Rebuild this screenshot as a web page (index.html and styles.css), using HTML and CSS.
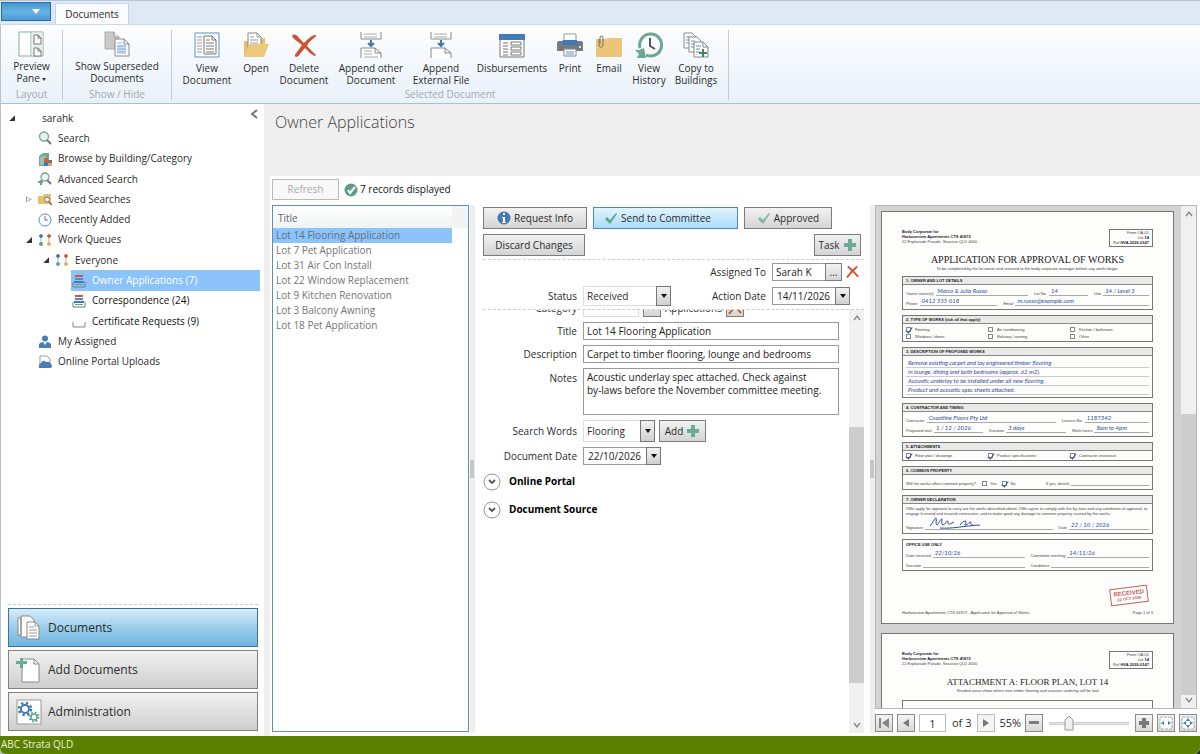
FILE: index.html
```html
<!DOCTYPE html>
<html lang="en">
<head>
<meta charset="utf-8">
<meta name="viewport" content="width=device-width, initial-scale=1">
<title>Documents - ABC Strata QLD</title>
<link rel="stylesheet" href="styles.css">
</head>
<body>
<svg class="defs" aria-hidden="true">
  <defs>
    <symbol id="plus" viewBox="0 0 14 14"><path d="M5 1h4v4h4v4H9v4H5V9H1V5h4z" fill="#6aab95"/></symbol>
    <symbol id="cross" viewBox="0 0 14 14"><path d="M2 1Q7 5 13 12M12 1Q6 6 1 13" fill="none" stroke="#d0522f" stroke-width="2"/></symbol>
    <symbol id="tick" viewBox="0 0 14 12"><path d="M1 7l2-2 3 3 6-7 1 1-7 10z" fill="#5fa58a"/></symbol>
    <symbol id="flow" viewBox="0 0 14 14"><path d="M3 3v8M11 3v8" stroke="#a8b4bc" stroke-width="1"/><path d="M1 3h4M3 1v4" stroke="#3f7ab5" stroke-width="1.500"/><circle cx="3" cy="3" r="1.500" fill="#3f7ab5"/><path d="M9 3h4M11 1v4" stroke="#d6573c" stroke-width="1.500"/><circle cx="11" cy="3" r="1.500" fill="#d6573c"/><circle cx="3" cy="11" r="2" fill="#5fa58a"/><circle cx="11" cy="11" r="2" fill="#e3b457"/></symbol>
    <symbol id="tray" viewBox="0 0 14 14"><path d="M3 1h8v2H3z" fill="#d6573c"/><path d="M3 4h8v2H3z" fill="#5b87ba"/><path d="M2 7h10v2H2z" fill="#3f7ab5"/><path d="M3 10h8v1H3z" fill="#5fa58a"/><path d="M1 8v5h12V8" fill="none" stroke="#777"/></symbol>
    <symbol id="chev-up" viewBox="0 0 10 10"><path d="M2 7l3-4 3 4" fill="none" stroke="#858585" stroke-width="1.3"/></symbol>
    <symbol id="chev-down" viewBox="0 0 10 10"><path d="M2 3l3 4 3-4" fill="none" stroke="#858585" stroke-width="1.3"/></symbol>
  </defs>
</svg>
<div class="app">
  <header class="tabs">
    <button class="app-menu" aria-label="Application menu"><svg width="8" height="5"><path d="M0 0h8L4 5z" fill="#fff"/></svg></button>
    <button class="tab">Documents</button>
  </header>

  <nav class="ribbon" aria-label="Ribbon">
    <section class="group group-layout">
      <div class="tools">
        <button class="tool"><svg width="26" height="26" viewBox="0 0 26 26"><path d="M1 1h24v24H1z" fill="#fff" stroke="#86b09c"/><path d="M13 1v24" stroke="#86b09c"/><path d="M13.500 1.500h11v23h-11z" fill="#e6f0ec"/><path d="M16 4h4l3 3v6h-7zM16 17h4l3 3v5h-7zM20 4v3h3M20 17v3h3" fill="#fff" stroke="#777"/></svg><span>Preview<br>Pane <i class="caret"></i></span></button>
      </div>
      <h2>Layout</h2>
    </section>
    <section class="group group-show">
      <div class="tools">
        <button class="tool"><svg width="26" height="26" viewBox="0 0 26 26"><path d="M1 1h9l5 5v12H1z" fill="#c9c9c9" stroke="#aaa"/><path d="M10 1v5h5" fill="#eee" stroke="#999"/><path d="M11 8h9l5 5v12H11z" fill="#fff" stroke="#888"/><path d="M20 8v5h5" fill="none" stroke="#888"/><path d="M13 14h9v9h-9z" fill="#c8dcf2"/><path d="M13 12h5M13 15h9M13 18h9M13 21h9" stroke="#8fb2d8"/></svg><span>Show Superseded<br>Documents</span></button>
      </div>
      <h2>Show / Hide</h2>
    </section>
    <section class="group group-doc">
      <div class="tools">
        <button class="tool low w60"><svg width="26" height="26" viewBox="0 0 26 26"><path d="M1 1h24v24H1z" fill="#fff" stroke="#5b8fc7"/><path d="M3 5h5M3 8h5M3 11h5M3 14h5M3 17h5M3 20h5" stroke="#999"/><path d="M10 4h8l4 4v14H10z" fill="#fff" stroke="#777"/><path d="M18 4v4h4M12 8h4M12 11h8M12 14h8M12 17h8M12 20h8" fill="none" stroke="#777"/></svg><span>View<br>Document</span></button>
        <button class="tool low w38"><svg width="28" height="26" viewBox="0 0 28 26"><path d="M2 24V9h4V6h17v6" fill="#e8bf6a"/><path d="M6 1h9l4 4v12H6z" fill="#fff" stroke="#888"/><path d="M15 1v4h4M8 5h4M8 8h8M8 11h8" fill="none" stroke="#999"/><path d="M7 12h20l-5 13H2z" fill="#ecc97d"/></svg><span>Open</span></button>
        <button class="tool low w58"><svg width="26" height="26" viewBox="0 0 26 26"><path d="M1 4c2-3 5-1 7 2l5 5C17 7 21 3 24 3c2 0 1 2-1 3-3 2-6 5-7 8 3 3 7 7 9 9-1 2-3 0-5-1l-6-6c-4 4-6 9-9 9-2-1-1-3 1-5l5-7C8 10 3 8 1 4z" fill="#cf5332"/></svg><span>Delete<br>Document</span></button>
        <button class="tool low w76"><svg width="24" height="26" viewBox="0 0 24 26"><path d="M2 0v7h20V0" fill="#fff" stroke="#888"/><path d="M5 2h13M5 5h13" stroke="#aaa"/><path d="M12 8v6M9 11l3 3 3-3" fill="none" stroke="#3f7ab5" stroke-width="2"/><path d="M2 26V16h14l6 5v5M16 16v5h6" fill="#fff" stroke="#888"/><path d="M5 19h8M5 22h8M5 25h14" stroke="#aaa"/></svg><span>Append other<br>Document</span></button>
        <button class="tool low w64"><svg width="24" height="26" viewBox="0 0 24 26"><path d="M2 0v7h20V0" fill="#fff" stroke="#888"/><path d="M5 2h13M5 5h13" stroke="#aaa"/><path d="M12 8v6M9 11l3 3 3-3" fill="none" stroke="#3f7ab5" stroke-width="2"/><path d="M2 26V16h14l6 5v5M16 16v5h6" fill="#fff" stroke="#888"/></svg><span>Append<br>External File</span></button>
        <button class="tool low w78"><svg width="26" height="26" viewBox="0 0 26 26"><path d="M1 3h24v22H1z" fill="#fff" stroke="#777"/><path d="M0 2h26v6H0z" fill="#447ab5"/><path d="M4 11h5M4 14h5M4 17h5M4 20h5M4 23h5" stroke="#777"/><path d="M12 10h10v3H12zM12 15h10v3H12zM12 20h10v3H12z" fill="#fff" stroke="#777"/></svg><span>Disbursements</span></button>
        <button class="tool low w38"><svg width="26" height="26" viewBox="0 0 26 26"><path d="M2 9h22q2 0 2 2v8H0v-8q0-2 2-2z" fill="#747a80"/><path d="M7 2h12v8H7z" fill="#fff" stroke="#999"/><path d="M6 8h14l1 5H5z" fill="#3f7ab5"/><path d="M7 17h12v7H7z" fill="#fff" stroke="#888"/><path d="M9 20h8M9 22h8" stroke="#5b94cc"/><circle cx="23" cy="15" r="1" fill="#fff"/></svg><span>Print</span></button>
        <button class="tool low w40"><svg width="26" height="26" viewBox="0 0 26 26"><path d="M0 7h10l2-1h14v19H0z" fill="#ebc67a"/><path d="M3 7v7q2 3 4 0V5q-1-2-3 0v7" fill="none" stroke="#7d7257"/></svg><span>Email</span></button>
        <button class="tool low w40"><svg width="28" height="26" viewBox="0 0 28 26"><path d="M5 16a11 11 0 1 1 6 7" fill="none" stroke="#6ba791" stroke-width="3"/><path d="M0 18h4l5-2 2 10H2l2-4z" fill="#6ba791"/><path d="M15 6v8l5 3" fill="none" stroke="#555" stroke-width="2"/></svg><span>View<br>History</span></button>
        <button class="tool low w54"><svg width="26" height="26" viewBox="0 0 26 26"><path d="M1 1h8l4 4v11H1z" fill="#fff" stroke="#888"/><path d="M3 5h4M3 8h4M3 11h4" stroke="#5b94cc"/><path d="M6 5h8l4 4v11H6z" fill="#fff" stroke="#888"/><path d="M8 9h4M8 12h4M8 15h4" stroke="#5b94cc"/><path d="M11 10h9l5 5v10H11z" fill="#fff" stroke="#888"/><path d="M20 10v5h5" fill="none" stroke="#888"/><path d="M13 14h5M13 17h4M13 20h4" stroke="#5b94cc"/><path d="M19 17h2v3h3v2h-3v3h-2v-3h-3v-2h3z" fill="#3a8a5d"/></svg><span>Copy to<br>Buildings</span></button>
      </div>
      <h2>Selected Document</h2>
    </section>
  </nav>

  <div class="body">
    <aside class="sidebar">
      <button class="collapse" aria-label="Collapse navigation"><svg width="8" height="10"><path d="M7 1L2 5l5 4" fill="none" stroke="#777" stroke-width="2"/></svg></button>
      <ul class="tree">
        <li class="node l0 root"><i class="exp"></i><a href="#">sarahk</a></li>
        <li class="node l1"><i></i><svg viewBox="0 0 14 14"><circle cx="6" cy="5.500" r="4.500" fill="#e6f3ee" stroke="#7da393" stroke-width="1.300"/><path d="M9 9l4 4" stroke="#777" stroke-width="2"/></svg><a href="#">Search</a></li>
        <li class="node l1"><i></i><svg viewBox="0 0 14 14"><path d="M1 4l4-3h6v13H1z" fill="#6fa893"/><path d="M3 5v8M5 4v9M7 4v9" stroke="#c5ddd3"/><path d="M6 6h4v4H6z" fill="#d6573c"/><path d="M10 8h4v3h-4z" fill="#777"/><path d="M6 10h4v4H6z" fill="#3f7ab5"/><path d="M10 11h4v3h-4z" fill="#e3a857"/></svg><a href="#">Browse by Building/Category</a></li>
        <li class="node l1"><i></i><svg viewBox="0 0 14 14"><circle cx="7" cy="5" r="4" fill="#e6f3ee" stroke="#7da393" stroke-width="1.300"/><path d="M9 8l4 4" stroke="#777" stroke-width="2"/><path d="M0 10h5M3 8v5" stroke="#5fa58a" stroke-width="2"/></svg><a href="#">Advanced Search</a></li>
        <li class="node l1"><i class="closed"></i><svg viewBox="0 0 14 14"><path d="M0 4h5l1-2h7v10H0z" fill="#e8bf6a"/><circle cx="9" cy="7.500" r="2.500" fill="#eee" stroke="#777"/><path d="M11 10l3 3" stroke="#666" stroke-width="1.500"/></svg><a href="#">Saved Searches</a></li>
        <li class="node l1"><i></i><svg viewBox="0 0 14 14"><circle cx="7" cy="7" r="6" fill="#fff" stroke="#5f8fc0"/><path d="M7 3v4h3" fill="none" stroke="#777"/></svg><a href="#">Recently Added</a></li>
        <li class="node l1"><i class="exp"></i><svg viewBox="0 0 14 14"><use href="#flow"/></svg><a href="#">Work Queues</a></li>
        <li class="node l2"><i class="exp"></i><svg viewBox="0 0 14 14"><use href="#flow"/></svg><a href="#">Everyone</a></li>
        <li class="node l3 selected"><svg viewBox="0 0 14 14"><use href="#tray"/></svg><a href="#">Owner Applications (7)</a></li>
        <li class="node l3 dark"><svg viewBox="0 0 14 14"><use href="#tray"/></svg><a href="#">Correspondence (24)</a></li>
        <li class="node l3 dark"><svg viewBox="0 0 14 14"><path d="M1 8v5h12V8" fill="none" stroke="#888"/></svg><a href="#">Certificate Requests (9)</a></li>
        <li class="node l1"><i></i><svg viewBox="0 0 14 14"><circle cx="7" cy="3.500" r="3" fill="#4a7fb5"/><path d="M1 13V9q2-2 4-2l2 3 2-3q2 0 4 2v4z" fill="#4a7fb5"/></svg><a href="#">My Assigned</a></li>
        <li class="node l1"><i></i><svg viewBox="0 0 14 14"><path d="M2 1h7l3 3v6H2z" fill="#fff" stroke="#999"/><path d="M1 13q-1-4 2-5 2-4 5-1 4-1 5 2 2 2 0 4z" fill="#4a7fb5"/></svg><a href="#">Online Portal Uploads</a></li>
      </ul>
      <div class="modules">
        <button class="module active"><svg width="26" height="26" viewBox="0 0 26 26"><path d="M2 3h3v17H2zM5 1h9l4 4v17H5z" fill="#fff" stroke="#888"/><path d="M11 7h8l4 4v13H11z" fill="#fff" stroke="#888"/><path d="M19 7v4h4M13 12h5M13 15h8M13 18h8M13 21h8" fill="none" stroke="#999"/></svg>Documents</button>
        <button class="module"><svg width="26" height="26" viewBox="0 0 26 26"><path d="M6 2h12l5 5v18H6z" fill="#fff" stroke="#888"/><path d="M18 2v5h5" fill="none" stroke="#888"/><path d="M4 1h3v3h4v3H7v4H4V7H0V4h4z" fill="#6aab95"/></svg>Add Documents</button>
        <button class="module"><svg width="26" height="26" viewBox="0 0 26 26"><path d="M1 1h24v24H1z" fill="#fff" stroke="#999"/><circle cx="9" cy="10" r="4" fill="none" stroke="#3f7ab5" stroke-width="2"/><circle cx="9" cy="10" r="6" fill="none" stroke="#3f7ab5" stroke-width="2.500" stroke-dasharray="2.360"/><circle cx="18" cy="18" r="3" fill="none" stroke="#5fa58a" stroke-width="1.500"/><circle cx="18" cy="18" r="4.500" fill="none" stroke="#5fa58a" stroke-width="2" stroke-dasharray="1.770"/></svg>Administration</button>
      </div>
    </aside>

    <main class="content">
      <h1 class="title">Owner Applications</h1>
      <div class="panes">
        <section class="list-pane">
          <div class="list-tools"><button class="refresh" disabled>Refresh</button>
            <p class="status"><svg width="14" height="14"><circle cx="7" cy="7" r="6.500" fill="#5d9f86"/><path d="M4 7l2 3 5-6" fill="none" stroke="#fff" stroke-width="2"/></svg>7 records displayed</p></div>
          <div class="list-box">
            <table class="records">
              <thead><tr><th scope="col">Title</th></tr></thead>
              <tbody>
                <tr class="current"><td>Lot 14 Flooring Application</td></tr>
                <tr><td>Lot 7 Pet Application</td></tr>
                <tr><td>Lot 31 Air Con Install</td></tr>
                <tr><td>Lot 22 Window Replacement</td></tr>
                <tr><td>Lot 9 Kitchen Renovation</td></tr>
                <tr><td>Lot 3 Balcony Awning</td></tr>
                <tr><td>Lot 18 Pet Application</td></tr>
              </tbody>
            </table>
          </div>
        </section>
        <div class="splitter"></div>

        <form class="form-pane">
          <div class="actions">
            <button type="button" class="btn w-104"><svg width="14" height="14"><circle cx="7" cy="7" r="6.500" fill="#4379b5"/><path d="M6 2h2v2H6zM5 6h3v5h1v1H5v-1h1V7H5z" fill="#fff"/></svg>Request Info</button>
            <button type="button" class="btn primary w-145"><svg width="14" height="12"><use href="#tick"/></svg>Send to Committee</button>
            <button type="button" class="btn w-88"><svg class="faded" width="14" height="12"><use href="#tick"/></svg>Approved</button>
          </div>
          <div class="actions spread">
            <button type="button" class="btn w-102">Discard Changes</button>
            <button type="button" class="btn task">Task<svg width="14" height="14"><use href="#plus"/></svg></button>
          </div>
          <div class="summary">
            <label class="lab-right" for="assigned">Assigned To</label>
            <div class="cluster"><input class="box assignee" id="assigned" value="Sarah K"><button type="button" class="btn more" aria-label="Choose assignee">...</button><button type="button" class="clear" aria-label="Clear assignee"><svg width="13" height="14" viewBox="0 0 14 14"><use href="#cross"/></svg></button></div>
            <label class="lab-left" for="status">Status</label>
            <span class="picker status-pick"><select id="status"><option>Received</option></select><i class="drop"></i></span>
            <label for="action">Action Date</label>
            <div class="cluster date"><input class="box" id="action" value="14/11/2026"><button type="button" class="drop" aria-label="Pick action date"></button></div>
          </div>
          <div class="scroller">
            <div class="fields">
              <label for="category">Category</label>
              <div class="cluster category"><input class="box soft" id="category"><button type="button" class="btn more" aria-label="Choose category"></button><span>Applications</span><button type="button" class="btn more" aria-label="Clear category"><svg width="14" height="14"><use href="#cross"/></svg></button></div>
              <label for="title">Title</label>
              <input class="box" id="title" value="Lot 14 Flooring Application">
              <label for="desc">Description</label>
              <input class="box" id="desc" value="Carpet to timber flooring, lounge and bedrooms">
              <label class="top" for="notes">Notes</label>
              <textarea class="box" id="notes">Acoustic underlay spec attached. Check against
by-laws before the November committee meeting.</textarea>
              <label for="words">Search Words</label>
              <div class="cluster"><span class="picker words"><select id="words"><option>Flooring</option></select><i class="drop"></i></span><button type="button" class="btn add">Add<svg width="14" height="14"><use href="#plus"/></svg></button></div>
              <label for="docdate">Document Date</label>
              <div class="cluster date"><input class="box" id="docdate" value="22/10/2026"><button type="button" class="drop" aria-label="Pick document date"></button></div>
              <button type="button" class="section-toggle"><svg width="18" height="18"><circle cx="9" cy="9" r="8" fill="#fff" stroke="#999"/><path d="M6 7l3 3 3-3" fill="none" stroke="#555" stroke-width="1.800"/></svg>Online Portal</button>
              <button type="button" class="section-toggle"><svg width="18" height="18"><circle cx="9" cy="9" r="8" fill="#fff" stroke="#999"/><path d="M6 7l3 3 3-3" fill="none" stroke="#555" stroke-width="1.800"/></svg>Document Source</button>
            </div>
            <div class="bar form-bar"><svg width="10" height="10"><use href="#chev-up"/></svg><i class="before"></i><i class="thumb"></i><i class="after"></i><svg width="10" height="10"><use href="#chev-down"/></svg></div>
          </div>
        </form>
        <div class="splitter"></div>

        <section class="preview-pane" aria-label="Document preview">
          <div class="viewer">
            <div class="sheets">
              <article class="sheet">
                <header class="sheet-head"><p><b>Body Corporate for<br>Harbourview Apartments CTS 41872</b><br>22 Esplanade Parade, Seaview QLD 4000</p><p class="ref">Form OA-01<br>Lot <b>14</b><br>Ref <b>HVA-2026-0147</b></p></header>
                <h2 class="wide">APPLICATION FOR APPROVAL OF WORKS</h2>
                <p class="sub">To be completed by the lot owner and returned to the body corporate manager before any works begin.</p>
                <section><h3>1. OWNER AND LOT DETAILS</h3><div class="part">
                  <div class="line c-owner"><p>Owner name(s)<em>Marco &amp; Julia Russo</em></p><p>Lot No.<em>14</em></p><p>Unit<em>14 / Level 3</em></p></div>
                  <div class="line c-phone"><p>Phone<em>0412 555 018</em></p><p>Email<em>m.russo@example.com</em></p></div></div></section>
                <section><h3>2. TYPE OF WORKS (tick all that apply)</h3><div class="part checks">
                  <p><i class="on"></i>Flooring</p><p><i></i>Air conditioning</p><p><i></i>Kitchen / bathroom</p><p><i></i>Windows / doors</p><p><i></i>Balcony / awning</p><p><i></i>Other</p></div></section>
                <section><h3>3. DESCRIPTION OF PROPOSED WORKS</h3><div class="part prose">
                  <em>Remove existing carpet and lay engineered timber flooring</em><em>in lounge, dining and both bedrooms (approx. 62 m2).</em><em>Acoustic underlay to be installed under all new flooring.</em><em>Product and acoustic spec sheets attached.</em></div></section>
                <section><h3>4. CONTRACTOR AND TIMING</h3><div class="part">
                  <div class="line c-contractor"><p>Contractor<em>Coastline Floors Pty Ltd</em></p><p>Licence No.<em>1187342</em></p></div>
                  <div class="line c-thirds"><p>Proposed start<em>1 / 12 / 2026</em></p><p>Duration<em>3 days</em></p><p>Work hours<em>8am to 4pm</em></p></div></div></section>
                <section><h3>5. ATTACHMENTS</h3><div class="part checks one"><p><i class="on"></i>Floor plan / drawings</p><p><i class="on"></i>Product specifications</p><p><i class="on"></i>Contractor insurance</p></div></section>
                <section><h3>6. COMMON PROPERTY</h3><div class="part"><div class="line c-common"><p>Will the works affect common property?</p><p class="opt"><i></i>Yes</p><p class="opt"><i class="on"></i>No</p><p>If yes, details<em></em></p></div></div></section>
                <section><h3>7. OWNER DECLARATION</h3><div class="part declare">
                  <p class="legal">I/We apply for approval to carry out the works described above. I/We agree to comply with the by-laws and any conditions of approval, to engage licensed and insured contractors, and to make good any damage to common property caused by the works.</p>
                  <div class="line c-sign"><p>Signature<em><svg width="56" height="12" viewBox="0 0 56 12"><path d="M3 9C6 6 7 2 9 1c1 2-1 6 1 7 2-1 3-6 5-6 0 2-1 6 1 6s3-4 5-4c0 2 0 4 2 3l4-2M33 8c2-3 4-4 6-4 0 3-2 4-1 4 3 0 4-3 6-3-1 2 0 3 2 3M13 11c12 1 23-2 40-3" fill="none" stroke="#2f4d9c" stroke-width="1"/></svg></em></p><p>Date<em>22 / 10 / 2026</em></p></div></div></section>
                <section class="office"><h4>OFFICE USE ONLY</h4>
                  <div class="line c-half"><p>Date received<em>22/10/26</em></p><p>Committee meeting<em>14/11/26</em></p></div>
                  <div class="line c-half"><p>Decision<em></em></p><p>Conditions<em></em></p></div></section>
                <div class="stamp"><b>RECEIVED</b>22 OCT 2026</div>
                <footer><span>Harbourview Apartments CTS 41872 - Application for Approval of Works</span><span>Page 1 of 3</span></footer>
              </article>
              <article class="sheet">
                <header class="sheet-head"><p><b>Body Corporate for<br>Harbourview Apartments CTS 41872</b><br>22 Esplanade Parade, Seaview QLD 4000</p><p class="ref">Form OA-01<br>Lot <b>14</b><br>Ref <b>HVA-2026-0147</b></p></header>
                <h2>ATTACHMENT A: FLOOR PLAN, LOT 14</h2>
                <p class="sub">Shaded areas show where new timber flooring and acoustic underlay will be laid</p>
                <div class="plan"></div>
              </article>
            </div>
            <div class="bar view-bar"><svg width="10" height="10"><use href="#chev-up"/></svg><i class="before"></i><i class="thumb"></i><svg width="10" height="10"><use href="#chev-down"/></svg></div>
          </div>
          <div class="pager">
            <button class="sq" aria-label="First page"><svg width="12" height="12"><path d="M1 1h2v10H1zM11 1v10L4 6z" fill="#858585"/></svg></button>
            <button class="sq" aria-label="Previous page"><svg width="12" height="12"><path d="M9 2v8L3 6z" fill="#777"/></svg></button>
            <input class="page-no" aria-label="Page number" value="1"><span class="of">of 3</span>
            <button class="sq light" aria-label="Next page"><svg width="12" height="12"><path d="M3 2v8l6-4z" fill="#777"/></svg></button>
            <span class="zoom">55%</span>
            <button class="sq" aria-label="Zoom out"><svg width="12" height="12"><path d="M1 4h10v3H1z" fill="#7c7c7c"/></svg></button>
            <input class="slider" type="range" aria-label="Zoom" min="0" max="100" value="20">
            <button class="sq" aria-label="Zoom in"><svg width="12" height="12"><path d="M4 1h4v3h3v4H8v3H4V8H1V4h3z" fill="#777"/></svg></button>
            <button class="sq" aria-label="Fit width"><svg width="14" height="14"><path d="M1 1h12v12H1z" fill="#fff" stroke="#aaa" stroke-dasharray="3 1"/><path d="M2 7l3-2v4zM12 7L9 5v4z" fill="#3f7ab5"/></svg></button>
            <button class="sq" aria-label="Fit page"><svg width="14" height="14"><path d="M1 1h12v12H1z" fill="#fff" stroke="#aaa" stroke-dasharray="3 1"/><path d="M2 7l3-2v4zM12 7L9 5v4zM7 2L5 5h4zM7 12L5 9h4z" fill="#3f7ab5"/></svg></button>
          </div>
        </section>
      </div>
    </main>
  </div>
  <footer class="statusbar">ABC Strata QLD</footer>
</div>
</body>
</html>
```
FILE: styles.css
```css
* { box-sizing: border-box; }
body {
  margin: 0;
  background: linear-gradient(90deg, #a9c7b0, #14202c);
  font: 10px/13px "Open Sans", "Noto Sans", sans-serif;
  color: #2b2b2b;
}
h1, h2, h3, h4, p, ul { margin: 0; padding: 0; font-weight: 400; }
button, input, select, textarea { font: inherit; color: inherit; margin: 0; border-radius: 0; }
button { padding: 0; background: none; border: 0; }
a { color: inherit; text-decoration: none; }
svg { flex: none; display: block; }
.defs { position: absolute; width: 0; height: 0; }
.app { display: flex; flex-direction: column; height: 100vh; min-width: 1000px; overflow: hidden; border-radius: 0 0 6px 6px; background: #fff; }

/* Tab strip and ribbon */
.tabs { display: flex; flex: none; height: 24px; gap: 4px; padding: 2px 0 0 1px; background: #dfe9f5; border-top: 1px solid #b3c4d9; }
.app-menu { display: flex; align-items: center; justify-content: center; width: 50px; height: 19px; margin-top: -1px; padding-left: 20px; border: 1px solid #2a6cb0; background: linear-gradient(#4796d0, #66b3e2 50%, #4d9bd4); }
.tab { width: 74px; height: 22px; border: 1px solid #c3d4e8; border-bottom: 0; background: #fafcfe; }
.ribbon { display: flex; flex: none; height: 80px; padding: 5px 0 3px; background: linear-gradient(#fdfeff, #e9f1fa); border-top: 1px solid #c9d8ea; border-bottom: 1px solid #a9bfd8; border-left: 1px solid #b4c5da; }
.group { display: flex; flex-direction: column; justify-content: space-between; border-right: 1px solid #c2ccd8; text-align: center; }
.group h2 { font-size: 10px; line-height: 12px; color: #a3a9b0; }
.group-layout { width: 62px; }
.group-show { width: 109px; }
.group-doc { padding: 0 5px; }
.tools { display: flex; justify-content: center; }
.tool { display: flex; flex-direction: column; align-items: center; gap: 3px; padding-top: 1px; line-height: 12px; height: 55px; white-space: nowrap; color: #2b2b2b; }
.low { gap: 4px; padding-top: 2px; }
.w38 { width: 38px; } .w40 { width: 40px; } .w54 { width: 54px; } .w58 { width: 58px; }
.w60 { width: 60px; } .w64 { width: 64px; } .w76 { width: 76px; } .w78 { width: 78px; }
.caret { display: inline-block; border: 2px solid transparent; border-top: 3px solid #333; border-bottom: 0; vertical-align: middle; }

/* Navigation */
.body { display: flex; flex: 1; min-height: 0; }
.sidebar { display: grid; grid-template: auto 1fr / 1fr; flex: none; width: 264px; border-left: 1px solid #b4c5da; }
.tree { grid-area: 1 / 1; display: grid; grid-auto-rows: 1fr; height: 264px; margin-top: 4px; list-style: none; }
.collapse { grid-area: 1 / 1; justify-self: end; align-self: start; margin: 5px 6px 0 0; z-index: 1; }
.node { display: flex; align-items: center; gap: 6px; margin-right: 4px; }
.node svg { width: 14px; height: 14px; }
.node > i { width: 6px; height: 6px; }
.exp { background: #333; clip-path: polygon(100% 0, 100% 100%, 0 100%); }
.closed { background: #999; clip-path: polygon(0 0, 100% 50%, 0 100%, 0 0, 1px 1px, 1px 5px, 4px 50%, 1px 1px); }
.l0 { padding-left: 8px; }
.l0 a { margin-left: 21px; }
.l1 { padding-left: 25px; }
.l2 { padding-left: 42px; }
.l3 { margin-left: 70px; padding-left: 1px; }
.dark { color: #111; }
.selected { background: #8cc3fb; color: #fff; }
.modules { align-self: end; display: flex; flex-direction: column; gap: 3px; margin: 0 6px 5px 7px; padding-top: 3px; border-top: 1px dashed #c8c8c8; }
.module { display: flex; align-items: center; gap: 6px; height: 39px; padding-left: 7px; border: 1px solid #818181; background: linear-gradient(#f1f1f1, #cecece); font-size: 12px; line-height: 16px; }
.active { border-color: #3d7496; background: linear-gradient(#d7ecf9, #9ccfec 50%, #6db4df); }

/* Content frame */
.content { display: flex; flex: 1; flex-direction: column; min-width: 0; background: #efefef; }
.title { flex: none; height: 72px; padding: 9px 11px; font-size: 16px; line-height: 18px; font-weight: 300; color: #444; }
.panes { display: flex; flex: 1; min-height: 0; margin-left: 6px; padding-left: 2px; background: #fff; }
.list-pane { display: flex; flex-direction: column; width: 197px; flex: none; padding: 3px 0 4px; }
.list-tools { display: flex; align-items: center; gap: 5px; margin-bottom: 5px; }
.refresh { width: 67px; height: 21px; border: 1px solid #bbb; background: #f8f8f8; color: #aaa; }
.status { display: flex; align-items: center; gap: 2px; color: #111; white-space: nowrap; }
.list-box { flex: 1; border: 1px solid #5f8db4; background: linear-gradient(#f3f3f3, #f3f3f3) right top / 16px 22px no-repeat; }
.records { width: 179px; border-collapse: collapse; }
.records th { height: 22px; padding: 2px 0 0 5px; text-align: left; font-weight: 400; color: #666; background: linear-gradient(#fff, #f1f2f3); }
.records td { height: 15px; padding: 0 3px; line-height: 15px; color: #757575; }
.current { background: #8cc3fb; }
.records .current td { color: #5f7182; }
.splitter { display: flex; align-items: center; flex: none; width: 5px; margin: 29px 0 3px 1px; background: #eee; }
.splitter::before { content: ""; width: 4px; height: 18px; background: #c6c6c6; }

/* Form */
.form-pane { display: flex; flex: 1; flex-direction: column; min-width: 380px; padding: 31px 5px 3px 8px; }
.actions { display: flex; gap: 6px; margin-bottom: 5px; }
.spread { justify-content: space-between; margin-right: 3px; margin-bottom: 3px; }
.btn { display: flex; align-items: center; justify-content: center; gap: 3px; height: 22px; padding: 0 8px; border: 1px solid #7d7d7d; background: linear-gradient(#f2f2f2, #d4d4d4); white-space: nowrap; }
.w-102 { width: 102px; } .w-104 { width: 104px; } .w-145 { width: 145px; } .w-88 { width: 88px; }
.primary { border-color: #4d86b8; background: linear-gradient(#e3f4fd, #a9dcf9); padding-right: 24px; }
.faded { opacity: .7; }
.task, .add { width: 47px; padding: 0; }
.summary { display: grid; grid-template-columns: 94px 1fr auto 92px; gap: 5px 6px; align-items: center; padding-top: 3px; border-top: 1px dashed #ccc; text-align: right; }
.lab-right { grid-column: 3; }
.cluster { display: flex; }
.box { min-width: 0; height: 18px; padding: 0 3px; border: 1px solid #999; background: #fff; outline: 0; color: #222; }
.assignee { width: 54px; }
.btn.more { height: 18px; width: 17px; padding: 0; margin-left: -1px; }
.clear { margin-left: 4px; }
.drop { display: flex; align-items: center; justify-content: center; width: 15px; border: 1px solid #777; background: linear-gradient(#f2f2f2, #d0d0d0); margin-left: -1px; }
.drop::before { content: ""; border: 3px solid transparent; border-top: 4px solid #111; border-bottom: 0; }
.date .box { width: 64px; padding: 0 0 0 4px; }
.picker { display: grid; height: 20px; }
.picker select { grid-area: 1 / 1; appearance: none; width: 100%; padding: 0 3px; border: 1px solid #ddd; background: #fff; outline: 0; }
.picker .drop { grid-area: 1 / 1; justify-self: end; pointer-events: none; }
.status-pick { width: 88px; }
.words { width: 72px; height: 22px; }
.add { margin-left: 4px; }
.scroller { display: flex; flex: 1; min-height: 0; overflow: hidden; margin-top: 3px; border-top: 1px dashed #ccc; }
.fields { display: grid; flex: 1; grid-template-columns: 94px 1fr; align-content: start; gap: 5px 6px; margin-top: -11px; padding-right: 10px; }
.fields label { justify-self: end; align-self: center; }
.fields .top { align-self: start; padding-top: 4px; }
.category { align-items: center; gap: 4px; }
.category input { width: 56px; }
.category .btn.more { margin-left: 0; width: 18px; }
.soft { border-color: #ddd; }
textarea.box { height: 47px; padding: 2px 3px; resize: none; overflow: hidden; line-height: 13px; }
.section-toggle { display: flex; grid-column: 1 / -1; align-items: center; gap: 8px; height: 23px; color: #000; font-weight: 700; }
.bar { display: flex; flex: none; flex-direction: column; align-items: center; width: 15px; padding: 3px 0; background: #f0f0f0; }
.bar i { width: 100%; }
.thumb { background: #cdcdcd; }
.form-bar .before { flex: 103; } .form-bar .thumb { flex: 254; } .form-bar .after { flex: 37; }
.view-bar .before { flex: 194; } .view-bar .thumb { flex: 279; }

/* Preview */
.preview-pane { display: flex; flex: none; flex-direction: column; width: 325px; padding: 29px 3px 4px 0; }
.viewer { display: flex; flex: 1; min-height: 0; border: 1px solid #b5b5b5; background: #d3d3d3; }
.sheets { flex: 1; overflow: hidden; padding: 5px 7px 0 5px; }
.sheet { height: 413px; margin-bottom: 9px; padding: 17px 20px 0; border: 1px solid #777; background: #fdfdfc; font: 4px/5px "Liberation Sans", Arial, sans-serif; color: #444; }
.sheet b { color: #222; font-weight: 700; }
.sheet-head { display: flex; justify-content: space-between; align-items: flex-start; }
.ref { padding: 0 3px 1px; border: 1px solid #777; text-align: right; }
.sheet h2 { margin-top: 7px; font: 9px/12px "Liberation Serif", "Times New Roman", serif; text-align: center; color: #222; white-space: nowrap; }
.sheet .wide { font-size: 10px; }
.sub { margin: 0 0 5px; text-align: center; white-space: nowrap; }
.sheet section { margin-bottom: 5px; border: 1px solid #777; }
.sheet h3 { height: 8px; padding: 1px 3px; border-bottom: 1px solid #888; background: #e8e9e8; font-size: 4px; line-height: 5px; font-weight: 700; color: #222; }
.part { padding: 1px 3px 3px; }
.line { display: grid; gap: 6px; height: 10px; }
.line p { display: flex; align-items: flex-end; gap: 2px; min-width: 0; white-space: nowrap; }
.line em { flex: 1; min-width: 0; height: 9px; border-bottom: 1px solid #aaa; padding-left: 2px; font: italic 6px/8px Lato, "Open Sans", sans-serif; color: #2f4d9c; }
.c-owner { grid-template-columns: 122fr 54fr 55fr; }
.c-phone { grid-template-columns: 91fr 145fr; }
.c-contractor { grid-template-columns: 149fr 87fr; }
.c-thirds { grid-template-columns: 1fr 1fr 1fr; }
.c-common { grid-template-columns: auto auto 1fr 103px; }
.c-sign { grid-template-columns: 146fr 90fr; }
.c-half { grid-template-columns: 1fr 1fr; }
.checks { display: grid; grid-template-columns: repeat(3, 82px); padding: 2px 3px 1px; }
.checks p, .line .opt { display: flex; align-items: center; gap: 4px; height: 7px; }
.line .opt { align-self: end; height: 5px; gap: 3px; }
.sheet i { position: relative; width: 5px; height: 5px; border: 1px solid #888; }
.sheet .on::after { content: ""; position: absolute; left: 0; top: -2px; width: 3px; height: 6px; border: solid #2f4d9c; border-width: 0 1px 1px 0; transform: rotate(35deg); }
.one { padding: 1px 3px; }
.prose { padding: 3px 3px 2px; }
.prose em { display: block; height: 9px; padding-left: 2px; border-bottom: 1px solid #ccc; font: italic 6px/8px Lato, "Open Sans", sans-serif; color: #2f4d9c; }
.legal { padding: 1px 0; }
.declare { padding-bottom: 3px; }
.declare .line { height: 13px; }
.declare em svg { margin-top: -4px; }
.office { padding: 2px 3px; }
.office h4 { font-size: 4px; line-height: 6px; font-weight: 700; color: #222; }
.stamp { width: 38px; margin: 16px 5px 0 auto; padding: 2px 0; border: 1px solid #c4605a; border-radius: 1px; font-size: 4px; line-height: 5px; font-weight: 700; text-align: center; color: #c4605a; transform: rotate(-7deg); }
.sheet .stamp b { display: block; font-size: 6px; line-height: 6px; color: inherit; }
.sheet footer { display: flex; justify-content: space-between; margin-top: 6px; }
.plan { height: 120px; margin-top: 7px; border: 1px solid #777; }

/* Pager */
.pager { display: flex; align-items: center; gap: 4px; margin-top: 5px; font-size: 11px; line-height: 16px; }
.sq { display: flex; flex: none; align-items: center; justify-content: center; width: 18px; height: 18px; border: 1px solid #8a8a8a; background: linear-gradient(#f4f4f4, #d8d8d8); }
.light { border-color: #bbb; background: #f4f4f4; }
.page-no { width: 27px; height: 18px; padding: 0; border: 1px solid #bbb; text-align: center; outline: 0; }
.of { padding: 0 2px; white-space: nowrap; }
.slider { flex: 1; min-width: 0; height: 18px; margin: 0 2px; appearance: none; background: transparent; }
.slider::-webkit-slider-runnable-track { height: 3px; border: 1px solid #ccc; background: #e6e6e6; }
.slider::-webkit-slider-thumb { appearance: none; width: 10px; height: 16px; margin-top: -8px; background: url("data:image/svg+xml,%3Csvg xmlns='http://www.w3.org/2000/svg' width='10' height='16'%3E%3Cpath d='M1 15V5l4-4 4 4v10z' fill='%23f0f0f0' stroke='%23999'/%3E%3C/svg%3E"); }

.statusbar { flex: none; height: 18px; padding: 1px; background: #5b8000; color: #e8efd8; line-height: 15px; }
```
